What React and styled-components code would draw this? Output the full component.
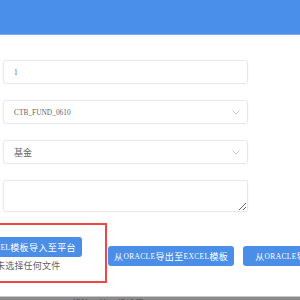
import React from 'react';
import styled, { createGlobalStyle } from 'styled-components';

const GlobalStyle = createGlobalStyle`
  body {
    margin: 0;
    background: #fff;
    font-family: "Liberation Serif", "Noto Sans CJK SC", serif;
    overflow: hidden;
  }
`

const Page = styled.div`
  width: 300px;
  height: 300px;
  display: flex;
  flex-direction: column;
  overflow: hidden;
`

const Header = styled.header`
  height: 34px;
  flex-shrink: 0;
  background: #4a8fe9;
  border-bottom: 1px solid #78aaf0;
`

const Form = styled.div`
  display: flex;
  flex-direction: column;
  gap: 16px;
  width: 245px;
  padding: 25px 0 0 3px;
`

const Field = styled.div`
  box-sizing: border-box;
  height: 24px;
  display: flex;
  align-items: center;
  justify-content: space-between;
  padding: 0 7px 0 10px;
  border: 1px solid #e6e8ee;
  border-radius: 3px;
  box-shadow: 0 0 2px rgba(0, 0, 0, 0.05);
  color: #666;
  font-size: 9px;
`

const Lat = styled.span`
  font-family: "Liberation Serif", serif;
  font-size: 7.4px;
`

const Area = styled.textarea`
  box-sizing: border-box;
  width: 245px;
  height: 32px;
  border: 1px solid #e6e8ee;
  border-radius: 3px;
  box-shadow: 0 0 2px rgba(0, 0, 0, 0.05);
  resize: vertical;
  outline: none;
  margin: 0;
`

const Actions = styled.div`
  display: flex;
  align-items: flex-start;
  margin-top: 11px;
`

const UploadBox = styled.div`
  box-sizing: border-box;
  flex-shrink: 0;
  width: 146px;
  height: 60px;
  margin-left: -39px;
  padding: 12px 0 0 6px;
  border: 2px solid #f04646;
  display: flex;
  flex-direction: column;
  align-items: flex-start;
`

const Button = styled.button`
  flex-shrink: 0;
  height: 20px;
  padding: 0 ${p => p.$padRight || 6}px 0 ${p => p.$padLeft || 6}px;
  border: none;
  border-radius: 3px;
  background: #4b8ee8;
  color: #fff;
  font-family: "Liberation Serif", "Noto Sans CJK SC", serif;
  font-size: 9px;
  letter-spacing: 0.4px;
  white-space: nowrap;
  display: flex;
  align-items: center;
`

const FileNote = styled.span`
  margin: 3px 0 0 27px;
  color: #606266;
  font-size: 9px;
  line-height: 12px;
  letter-spacing: 0.2px;
  font-family: "Noto Sans CJK SC", sans-serif;
`

const ButtonGroup = styled.div`
  display: flex;
  gap: 9px;
  padding-top: 23px;
  margin-left: 1px;
`

const Footer = styled.footer`
  margin-top: auto;
  height: 3px;
  flex-shrink: 0;
  overflow: hidden;
  background: #8a8a8a;
  border-top: 1px solid #c8c8c8;
  padding-left: 72px;
  color: #444;
  font-size: 9px;
  line-height: 13px;
  font-family: "Noto Sans CJK SC", sans-serif;
`

const Chevron = () => (
  <svg width="8" height="5" viewBox="0 0 8 5">
    <polyline points="0.5,0.5 4,4 7.5,0.5" fill="none" stroke="#c0c4cc" strokeWidth="0.9" />
  </svg>
);

export default function App() {
  return (
    <Page>
      <GlobalStyle />
      <Header />
      <Form>
        <Field>
          <Lat>1</Lat>
        </Field>
        <Field>
          <Lat>CTB_FUND_0610</Lat>
          <Chevron />
        </Field>
        <Field>
          <span>基金</span>
          <Chevron />
        </Field>
        <Area />
      </Form>
      <Actions>
        <UploadBox>
          <Button>从<Lat>EXCEL</Lat>模板导入至平台</Button>
          <FileNote>未选择任何文件</FileNote>
        </UploadBox>
        <ButtonGroup>
          <Button>从<Lat>ORACLE</Lat>导出至<Lat>EXCEL</Lat>模板</Button>
          <Button $padLeft={12}>从<Lat>ORACLE</Lat>导入至平台</Button>
        </ButtonGroup>
      </Actions>
      <Footer>标注：第一根设置</Footer>
    </Page>
  );
}
